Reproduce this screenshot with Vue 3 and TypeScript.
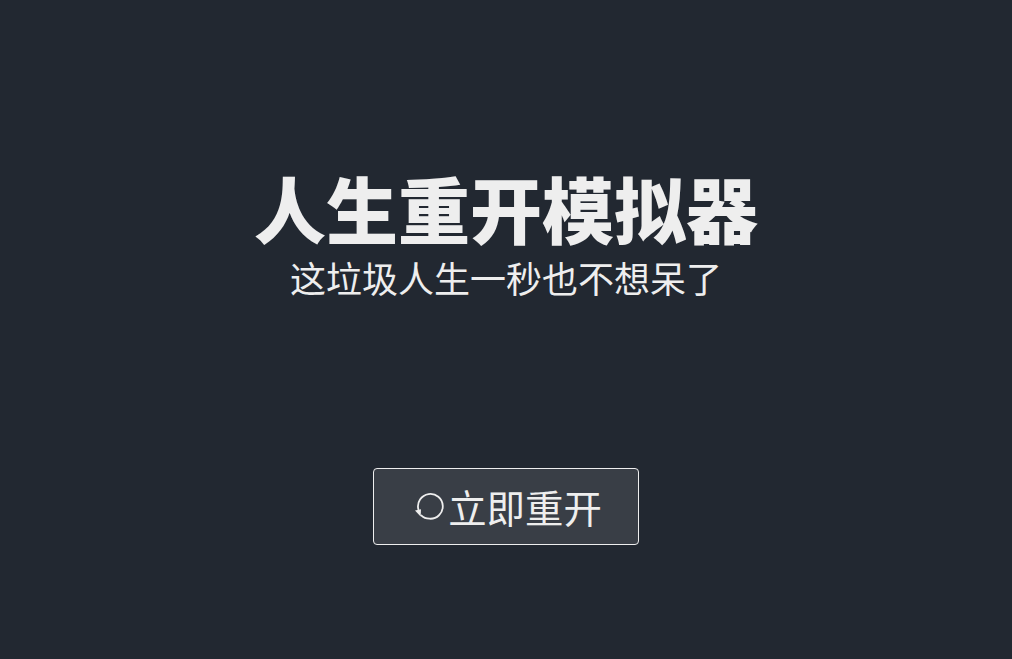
<script setup lang="ts">
const title = '人生重开模拟器'
const subtitle = '这垃圾人生一秒也不想呆了'
const action = '立即重开'
</script>

<template>
  <main class="page">
    <h1 class="title">{{ title }}</h1>
    <p class="subtitle">{{ subtitle }}</p>
    <button class="restart" type="button">
      <svg class="icon" viewBox="0 0 32 32" fill="none" aria-hidden="true">
        <path d="M5.4 18.5A12.4 12.4 0 1 1 16.5 27.7C13 27.7 10.2 26.5 8.2 24.4" stroke="#eeeeee" stroke-width="1.8" stroke-linecap="round" />
        <path d="M2 19.4 8 18.2 7.6 25.6Z" fill="#eeeeee" />
      </svg>
      <span>{{ action }}</span>
    </button>
  </main>
</template>

<style scoped>
.page {
  box-sizing: border-box;
  height: 659px;
  padding-top: 167px;
  background: #222831;
  color: #eeeeee;
  display: flex;
  flex-direction: column;
  align-items: center;
  font-family: "Noto Sans CJK SC", "Noto Sans", sans-serif;
  overflow: hidden;
}
.title {
  margin: 0;
  font-size: 72px;
  line-height: 80px;
  font-weight: 900;
}
.subtitle {
  margin: 0;
  font-size: 36px;
  line-height: 60px;
  font-weight: 400;
}
.restart {
  box-sizing: border-box;
  width: 266px;
  height: 77px;
  margin-top: 161px;
  padding: 0 0 0 3px;
  display: flex;
  align-items: center;
  justify-content: center;
  gap: 3px;
  background: #393e46;
  border: 1px solid #eeeeee;
  border-radius: 4px;
  color: #eeeeee;
  font: inherit;
  font-size: 38.4px;
  line-height: 1;
}
.icon {
  width: 32px;
  height: 32px;
  flex: none;
}
</style>
